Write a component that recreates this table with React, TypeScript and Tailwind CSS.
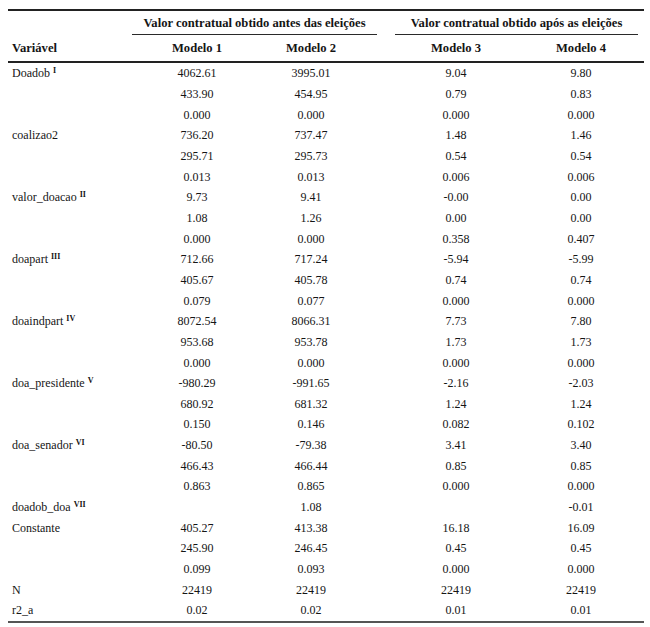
const rows: [string, string | null, string[]][] = [
  ["Doadob", "I", ["4062.61", "3995.01", "9.04", "9.80"]],
  ["", null, ["433.90", "454.95", "0.79", "0.83"]],
  ["", null, ["0.000", "0.000", "0.000", "0.000"]],
  ["coalizao2", null, ["736.20", "737.47", "1.48", "1.46"]],
  ["", null, ["295.71", "295.73", "0.54", "0.54"]],
  ["", null, ["0.013", "0.013", "0.006", "0.006"]],
  ["valor_doacao", "II", ["9.73", "9.41", "-0.00", "0.00"]],
  ["", null, ["1.08", "1.26", "0.00", "0.00"]],
  ["", null, ["0.000", "0.000", "0.358", "0.407"]],
  ["doapart", "III", ["712.66", "717.24", "-5.94", "-5.99"]],
  ["", null, ["405.67", "405.78", "0.74", "0.74"]],
  ["", null, ["0.079", "0.077", "0.000", "0.000"]],
  ["doaindpart", "IV", ["8072.54", "8066.31", "7.73", "7.80"]],
  ["", null, ["953.68", "953.78", "1.73", "1.73"]],
  ["", null, ["0.000", "0.000", "0.000", "0.000"]],
  ["doa_presidente", "V", ["-980.29", "-991.65", "-2.16", "-2.03"]],
  ["", null, ["680.92", "681.32", "1.24", "1.24"]],
  ["", null, ["0.150", "0.146", "0.082", "0.102"]],
  ["doa_senador", "VI", ["-80.50", "-79.38", "3.41", "3.40"]],
  ["", null, ["466.43", "466.44", "0.85", "0.85"]],
  ["", null, ["0.863", "0.865", "0.000", "0.000"]],
  ["doadob_doa", "VII", ["", "1.08", "", "-0.01"]],
  ["Constante", null, ["405.27", "413.38", "16.18", "16.09"]],
  ["", null, ["245.90", "246.45", "0.45", "0.45"]],
  ["", null, ["0.099", "0.093", "0.000", "0.000"]],
  ["N", null, ["22419", "22419", "22419", "22419"]],
  ["r2_a", null, ["0.02", "0.02", "0.01", "0.01"]],
];

const cols = "grid grid-cols-[132px_114px_114px_26px_124px_126px]";

export default function App() {
  return (
    <div className="w-[650px] h-[627px] bg-white text-[#151515] text-[12px] pt-[9px] pl-[8px] font-['Liberation_Serif','Times_New_Roman',serif]">
      <div className="w-[636px]">
        <div className="h-[1.5px] bg-[#222]" />

        {/* group headers */}
        <div className="flex h-[24.5px]">
          <div className="w-[124px]" />
          <div className="w-[245px] flex flex-col">
            <div className="flex-1 flex items-center justify-center font-bold text-[12.6px] pt-[2px] whitespace-nowrap">
              Valor contratual obtido antes das eleições
            </div>
            <div className="h-px bg-[#2a2a2a]" />
          </div>
          <div className="w-[18px]" />
          <div className="w-[243px] flex flex-col">
            <div className="flex-1 flex items-center justify-center font-bold text-[12.6px] pt-[2px] whitespace-nowrap">
              Valor contratual obtido após as eleições
            </div>
            <div className="h-px bg-[#2a2a2a]" />
          </div>
        </div>

        <div className={`${cols} h-[26px] items-center font-bold text-[12.6px]`}>
          <div className="pl-[4px]">Variável</div>
          <div className="text-center">Modelo 1</div>
          <div className="text-center">Modelo 2</div>
          <div />
          <div className="text-center">Modelo 3</div>
          <div className="text-center">Modelo 4</div>
        </div>
        <div className="h-[2px] bg-[#222]" />

        <div>
          {rows.map(([name, sup, vals], i) => (
            <div key={i} className={`${cols} h-[20.67px] items-center`}>
              <div className="pl-[4px] whitespace-nowrap">
                {name}
                {sup && (
                  <sup className="ml-[3px] text-[8px] font-bold">{sup}</sup>
                )}
              </div>
              <div className="text-center">{vals[0]}</div>
              <div className="text-center">{vals[1]}</div>
              <div />
              <div className="text-center">{vals[2]}</div>
              <div className="text-center">{vals[3]}</div>
            </div>
          ))}
        </div>
        <div className="h-[2px] bg-[#555]" />
      </div>
    </div>
  );
}
